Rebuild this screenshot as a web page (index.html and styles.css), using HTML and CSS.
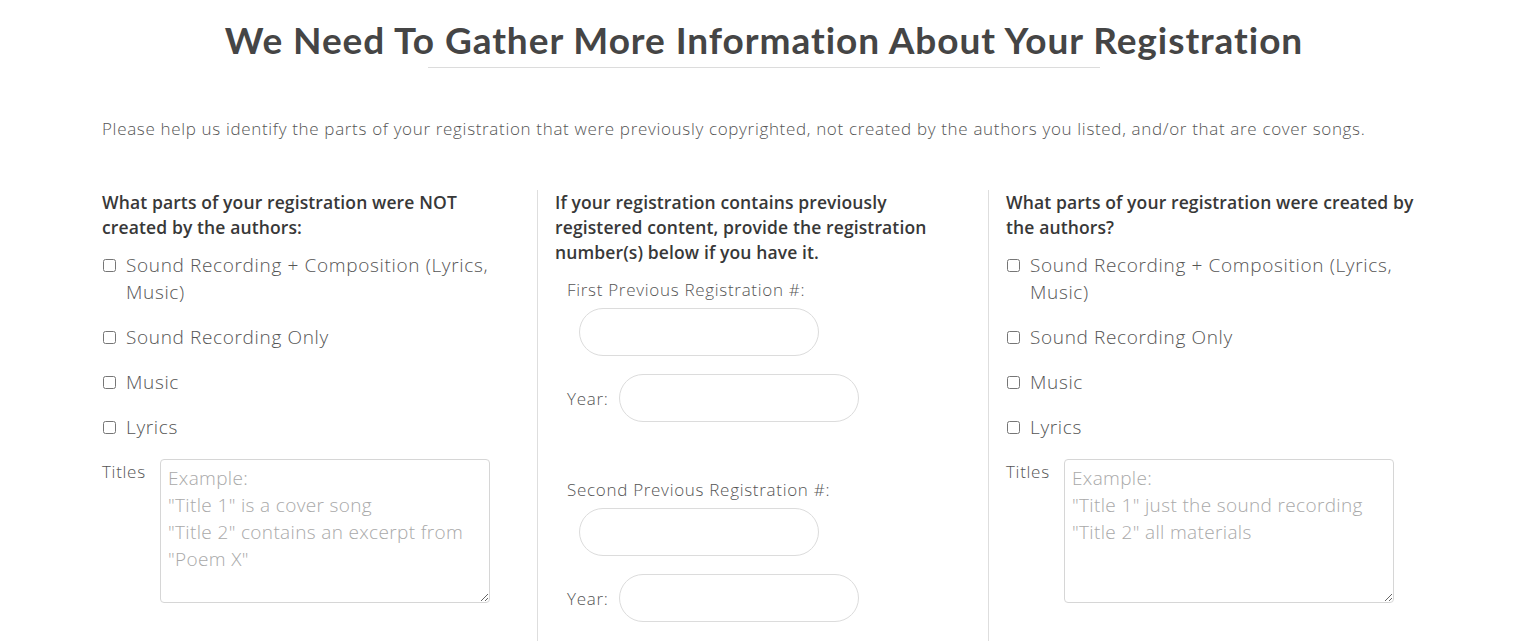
FILE: index.html
```html
<!DOCTYPE html>
<html>
<head>
<meta charset="utf-8">
<link rel="stylesheet" href="styles.css">
</head>
<body>
<div class="page">
  <h1 class="title">We Need To Gather More Information About Your Registration</h1>
  <div class="rule"></div>
  <p class="intro">Please help us identify the parts of your registration that were previously copyrighted, not created by the authors you listed, and/or that are cover songs.</p>
  <div class="cols">
    <div class="col">
      <h3 class="col-head">What parts of your registration were NOT created by the authors:</h3>
      <label class="check"><input type="checkbox"><span>Sound Recording + Composition (Lyrics, Music)</span></label>
      <label class="check"><input type="checkbox"><span>Sound Recording Only</span></label>
      <label class="check"><input type="checkbox"><span>Music</span></label>
      <label class="check"><input type="checkbox"><span>Lyrics</span></label>
      <div class="titles">
        <span class="titles-label">Titles</span>
        <textarea class="titles-box" placeholder="Example:
&quot;Title 1&quot; is a cover song
&quot;Title 2&quot; contains an excerpt from &quot;Poem X&quot;"></textarea>
      </div>
    </div>
    <div class="col col-line">
      <h3 class="col-head">If your registration contains previously registered content, provide the registration number(s) below if you have it.</h3>
      <div class="reg">
        <div class="reg-label">First Previous Registration #:</div>
        <input class="pill reg-num" type="text">
        <div class="year-row"><span class="year-label">Year:</span><input class="pill" type="text"></div>
      </div>
      <div class="reg reg-second">
        <div class="reg-label">Second Previous Registration #:</div>
        <input class="pill reg-num" type="text">
        <div class="year-row"><span class="year-label">Year:</span><input class="pill" type="text"></div>
      </div>
    </div>
    <div class="col col-line">
      <h3 class="col-head">What parts of your registration were created by the authors?</h3>
      <label class="check"><input type="checkbox"><span>Sound Recording + Composition (Lyrics, Music)</span></label>
      <label class="check"><input type="checkbox"><span>Sound Recording Only</span></label>
      <label class="check"><input type="checkbox"><span>Music</span></label>
      <label class="check"><input type="checkbox"><span>Lyrics</span></label>
      <div class="titles">
        <span class="titles-label">Titles</span>
        <textarea class="titles-box" placeholder="Example:
&quot;Title 1&quot; just the sound recording
&quot;Title 2&quot; all materials"></textarea>
      </div>
    </div>
  </div>
</div>
</body>
</html>
```

FILE: styles.css
```css
html, body {
  margin: 0;
  padding: 0;
  background: #fff;
  overflow: hidden;
}
body {
  font-family: "Open Sans", "Liberation Sans", sans-serif;
  color: #555;
}
.page {
  width: 1360px;
  margin: 0 auto;
  height: 641px;
}
.title {
  margin: 0;
  padding-top: 18px;
  text-align: center;
  font-family: Lato, "Liberation Sans", sans-serif;
  font-weight: 700;
  font-size: 37px;
  line-height: 44px;
  color: #454545;
  letter-spacing: 0.95px;
}
.rule {
  width: 672px;
  height: 1px;
  background: #dcdcdc;
  margin: 5px auto 0;
}
.intro {
  margin: 49px 0 0;
  padding-left: 18px;
  font-size: 17px;
  line-height: 24px;
  font-weight: 300;
  color: #555;
  letter-spacing: 0.67px;
}
.cols {
  display: grid;
  grid-template-columns: 453px 451px 451px;
  margin-top: 49px;
}
.col {
  padding: 0 18px;
  min-height: 460px;
}
.col-line {
  border-left: 1px solid #dedede;
  padding-left: 17px;
}
.col-head {
  margin: 0 0 12px;
  font-size: 17.5px;
  line-height: 25px;
  font-weight: 600;
  color: #383838;
  letter-spacing: 0.12px;
}
.check {
  display: flex;
  align-items: flex-start;
  font-size: 19px;
  line-height: 27px;
  font-weight: 300;
  color: #555;
  margin-bottom: 18px;
  padding-right: 20px;
  letter-spacing: 0.65px;
}
.check input {
  width: 13px;
  height: 13px;
  margin: 7px 10px 0 1px;
  flex: none;
}
.titles {
  display: flex;
  align-items: flex-start;
  padding-top: 1px;
}
.titles-label {
  width: 58px;
  flex: none;
  font-size: 17px;
  line-height: 24px;
  font-weight: 300;
  color: #555;
  letter-spacing: 0.7px;
}
.titles-box {
  width: 330px;
  height: 144px;
  box-sizing: border-box;
  border: 1px solid #d6d6d6;
  border-radius: 4px;
  padding: 5px 7px 4px;
  font-family: "Open Sans", "Liberation Sans", sans-serif;
  font-size: 19px;
  line-height: 27px;
  font-weight: 300;
  letter-spacing: 0.35px;
  margin: -1px 0 0;
  resize: both;
}
.titles-box::placeholder {
  color: #a9a9a9;
}
.reg {
  padding-left: 12px;
  margin-top: 13px;
}
.reg-second {
  margin-top: 56px;
}
.reg-label {
  font-size: 17px;
  line-height: 24px;
  font-weight: 300;
  color: #555;
  letter-spacing: 0.7px;
}
.pill {
  display: block;
  width: 240px;
  height: 48px;
  box-sizing: border-box;
  border: 1px solid #dcdcdc;
  border-radius: 24px;
  padding: 0 16px;
  font-size: 17px;
  outline: none;
}
.reg-num {
  margin: 6px 0 0 12px;
}
.year-row {
  display: flex;
  align-items: center;
  margin-top: 18px;
  gap: 11px;
}
.year-label {
  font-size: 17px;
  font-weight: 300;
  color: #555;
  letter-spacing: 0.7px;
}
```
